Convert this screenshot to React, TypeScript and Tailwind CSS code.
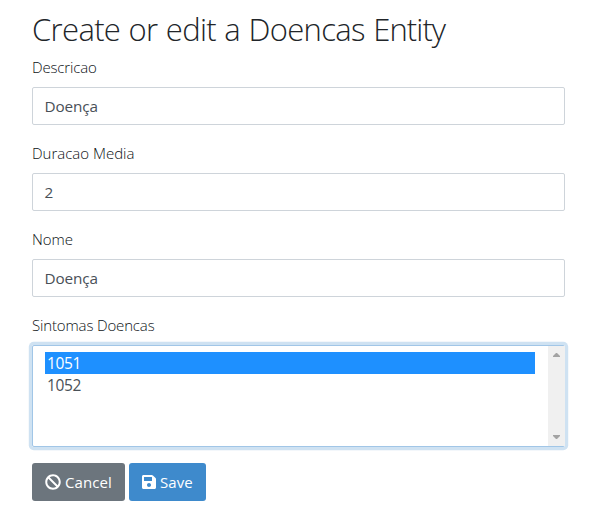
import { FaBan, FaSave } from "react-icons/fa";

const sans = "font-['Open_Sans','Noto_Sans',sans-serif]";

function Field({ label, value, spacing }: { label: string; value: string; spacing: string }) {
  return (
    <div className="mb-4">
      <label className={`mb-2 block h-6 text-[15px] leading-6 font-light whitespace-nowrap text-[#0c1115] ${spacing}`}>{label}</label>
      <div className="flex h-[38px] items-center rounded-[2px] border border-[#ced4da] pr-3 pl-[11.5px] text-[15.3px] leading-6 text-[#495057]">
        <span className="tracking-[-0.1px]">{value}</span>
      </div>
    </div>
  );
}

export default function App() {
  return (
    <main className={`h-[514px] w-[614px] overflow-hidden bg-white pt-[9px] pl-8 ${sans}`}>
      <form className="w-[533px]">
        <h2 className="mb-2 h-[38px] text-[31px] leading-[41px] font-light tracking-[-0.65px] whitespace-nowrap text-[#212529] [word-spacing:0.9px]">
          Create or edit a Doencas <span className="tracking-[-0.9px]">Entity</span>
        </h2>
        <Field label="Descricao" value="Doença" spacing="tracking-[-0.15px]" />
        <Field label="Duracao Media" value="2" spacing="tracking-[0px]" />
        <Field label="Nome" value="Doença" spacing="tracking-[0px]" />
        <label className="mb-2 block h-6 text-[15px] leading-6 font-light tracking-[-0.15px] text-[#0c1115]">Sintomas Doencas</label>
        <div className="mb-4 flex h-[102px] justify-between rounded-[2px] border border-[#a1c6e7] shadow-[0_0_0_3.2px_rgba(62,138,204,0.25)]">
          <ul className="ml-3 w-[490px] pt-1.5 text-[15.5px] leading-[23px] tracking-[-0.35px] text-[#495057]">
            <li className="h-[22px] bg-[#1e90ff] pl-0.5 text-white">1051</li>
            <li className="h-[22px] pl-0.5">1052</li>
          </ul>
          <div className="-mr-px flex w-[17px] flex-col items-center justify-between bg-[#f0f0f0] py-[7px]">
            <svg width="7" height="4" viewBox="0 0 7 4" fill="#a3a3a3"><path d="M0 4V3L3 0h1l3 3v1z" /></svg>
            <svg width="7" height="4" viewBox="0 0 7 4" fill="#a3a3a3"><path d="M0 0v1l3 3h1l3-3V0z" /></svg>
          </div>
        </div>
        <div className="flex gap-1 text-[15px] leading-6 text-white">
          <button type="button" className="flex h-[38px] w-[93px] items-center rounded-[3px] bg-[#6c757d] pl-[13px]">
            <FaBan size={16} />
            <span className="ml-1 tracking-[0.1px]">Cancel</span>
          </button>
          <button type="button" className="flex h-[38px] w-[77px] items-center rounded-[3px] bg-[#3e8acc] pl-[13px]">
            <FaSave className="h-4 w-3.5" />
            <span className="ml-1 tracking-[0.1px]">Save</span>
          </button>
        </div>
      </form>
    </main>
  );
}
